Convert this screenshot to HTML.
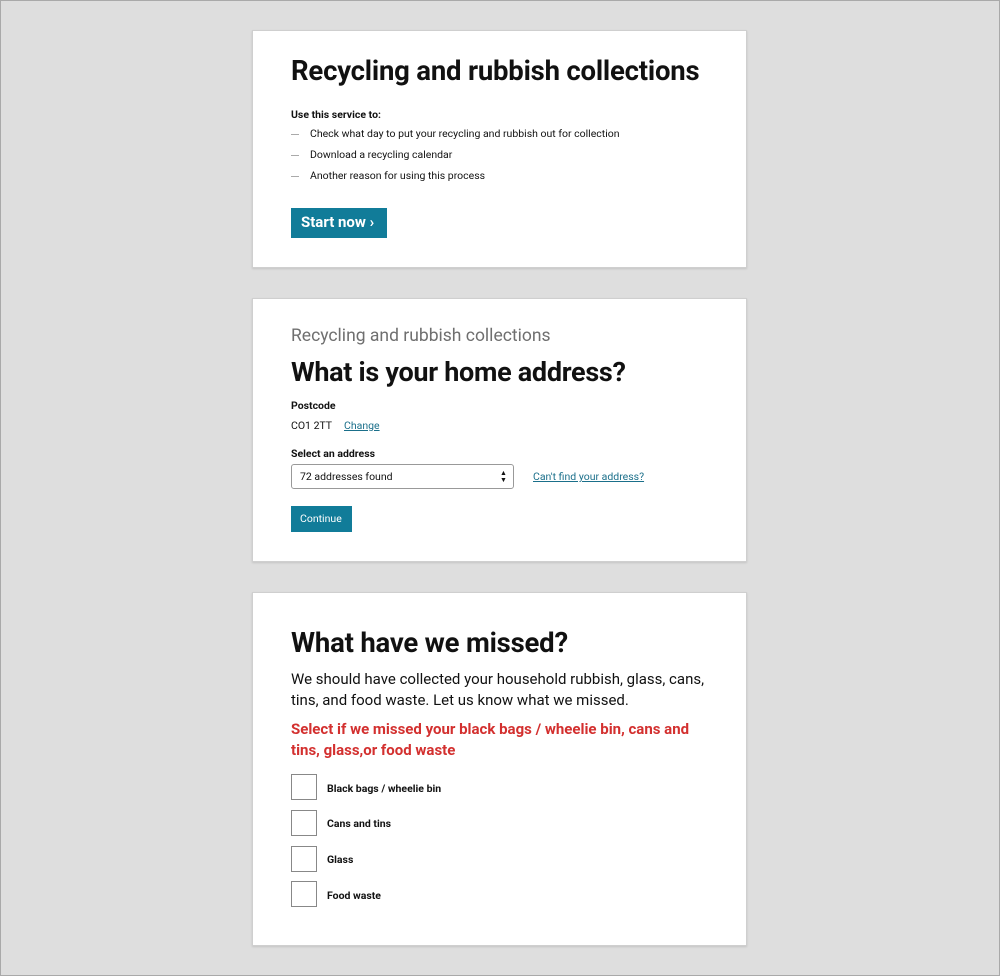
<!DOCTYPE html>
<html><head><style>
*{margin:0;padding:0;box-sizing:border-box}
body{width:1000px;height:976px;background:#dedede;border:1px solid #a9a9a9;position:relative;font-family:"Roboto","Liberation Sans",sans-serif;color:#111;overflow:hidden}
.card{position:absolute;left:251px;width:495px;background:#fff;border:1px solid #cfcfcf;box-shadow:0 1px 2px rgba(0,0,0,.12)}
.a{position:absolute;white-space:nowrap;line-height:1}
.h{font-weight:bold;font-size:27.5px;letter-spacing:-0.2px}
.s{font-size:10.5px}
.b{font-weight:bold}
.btn{position:absolute;background:#117c99;color:#fff}
.lnk{color:#1a6f8a;text-decoration:underline}
.cb{position:absolute;left:38px;width:26px;height:26px;border:1.5px solid #888;background:#fff}
.d{position:absolute;left:38px;width:8px;height:1px;background:#aaa}
</style></head><body>
<div class="card" style="top:29px;height:238px">
 <div class="a h" style="left:38px;top:26px">Recycling and rubbish collections</div>
 <div class="a s b" style="left:38px;top:79px">Use this service to:</div>
 <div class="d" style="top:103px"></div><div class="a s" style="left:57px;top:98px">Check what day to put your recycling and rubbish out for collection</div>
 <div class="d" style="top:124px"></div><div class="a s" style="left:57px;top:119px">Download a recycling calendar</div>
 <div class="d" style="top:145px"></div><div class="a s" style="left:57px;top:140px">Another reason for using this process</div>
 <div class="btn" style="left:38px;top:177px;width:96px;height:30px"><span class="a b" style="left:10px;top:7px;font-size:15px">Start now ›</span></div>
</div>
<div class="card" style="top:297px;height:264px">
 <div class="a" style="left:38px;top:29px;font-size:17.5px;color:#6f6f6f">Recycling and rubbish collections</div>
 <div class="a" style="left:38px;top:60px;font-weight:bold;font-size:27px;letter-spacing:-0.3px">What is your home address?</div>
 <div class="a s b" style="left:38px;top:102px">Postcode</div>
 <div class="a s" style="left:38px;top:122px">CO1 2TT</div><div class="a s lnk" style="left:91px;top:122px">Change</div>
 <div class="a s b" style="left:38px;top:150px">Select an address</div>
 <div style="position:absolute;left:38px;top:165px;width:223px;height:25px;border:1px solid #999;border-radius:3px"><span class="a s" style="left:8px;top:7px">72 addresses found</span><span class="a" style="left:208px;top:5px;font-size:7px;line-height:7px">▲<br>▼</span></div>
 <div class="a s lnk" style="left:280px;top:173px">Can't find your address?</div>
 <div class="btn" style="left:38px;top:207px;width:61px;height:26px"><span class="a s" style="left:9px;top:8px">Continue</span></div>
</div>
<div class="card" style="top:591px;height:354px">
 <div class="a h" style="left:38px;top:36px">What have we missed?</div>
 <div class="a" style="left:38px;top:76px;font-size:15px;line-height:21px">We should have collected your household rubbish, glass, cans,<br>tins, and food waste. Let us know what we missed.</div>
 <div class="a b" style="left:38px;top:126px;font-size:15px;line-height:21px;color:#d3302f">Select if we missed your black bags / wheelie bin, cans and<br>tins, glass,or food waste</div>
 <div class="cb" style="top:181px"></div><div class="a s b" style="left:74px;top:191px">Black bags / wheelie bin</div>
 <div class="cb" style="top:217px"></div><div class="a s b" style="left:74px;top:226px">Cans and tins</div>
 <div class="cb" style="top:253px"></div><div class="a s b" style="left:74px;top:262px">Glass</div>
 <div class="cb" style="top:288px"></div><div class="a s b" style="left:74px;top:298px">Food waste</div>
</div>
</body></html>
